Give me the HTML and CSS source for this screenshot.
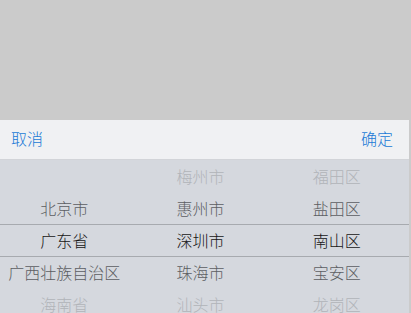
FILE: index.html
```html
<!DOCTYPE html>
<html lang="zh-CN">
<head>
  <meta charset="UTF-8">
  <title>地区选择</title>
  <link rel="stylesheet" href="styles.css">
</head>
<body>
  <div class="mask"></div>
  <div class="picker-panel">
    <div class="toolbar">
      <span class="tool-btn">取消</span>
      <span class="tool-btn">确定</span>
    </div>
    <div class="picker">
      <div class="column">
        <div class="item"></div>
        <div class="item near">北京市</div>
        <div class="item active">广东省</div>
        <div class="item near">广西壮族自治区</div>
        <div class="item far">海南省</div>
      </div>
      <div class="column">
        <div class="item far">梅州市</div>
        <div class="item near">惠州市</div>
        <div class="item active">深圳市</div>
        <div class="item near">珠海市</div>
        <div class="item far">汕头市</div>
      </div>
      <div class="column">
        <div class="item far">福田区</div>
        <div class="item near">盐田区</div>
        <div class="item active">南山区</div>
        <div class="item near">宝安区</div>
        <div class="item far">龙岗区</div>
      </div>
      <div class="highlight"></div>
    </div>
  </div>
</body>
</html>
```

FILE: styles.css
```css
* {
  box-sizing: border-box;
}
html, body {
  height: 100%;
}
body {
  margin: 0;
  overflow: hidden;
  font-family: "Noto Sans CJK SC", "Noto Sans", sans-serif;
  font-weight: 300;
  background: #cbcbcb;
}
.mask {
  height: 120px;
  background: #cbcbcb;
}
.picker-panel {
  width: 409px;
}
.toolbar {
  height: 40px;
  display: flex;
  justify-content: space-between;
  align-items: center;
  padding: 0 16px 3px 11px;
  background: #f0f1f3;
  border-bottom: 1px solid #d2d4d8;
}
.tool-btn {
  font-size: 16px;
  color: #1a7ad6;
}
.picker {
  position: relative;
  display: grid;
  grid-template-columns: repeat(3, 1fr);
  height: 160px;
  background: #d5d8de;
}
.column:not(:last-of-type) {
  padding-right: 8px;
}
.column:last-of-type {
  padding-left: 6px;
}
.item {
  height: 32px;
  line-height: 32px;
  text-align: center;
  font-size: 16px;
  white-space: nowrap;
  color: #5c5e62;
}
.item.far {
  color: #b1b4b9;
}
.item.active {
  color: #151515;
}
.highlight {
  position: absolute;
  left: 0;
  right: 0;
  top: 64px;
  height: 33px;
  border-top: 1px solid #a7aaaf;
  border-bottom: 1px solid #a7aaaf;
  pointer-events: none;
}
```
